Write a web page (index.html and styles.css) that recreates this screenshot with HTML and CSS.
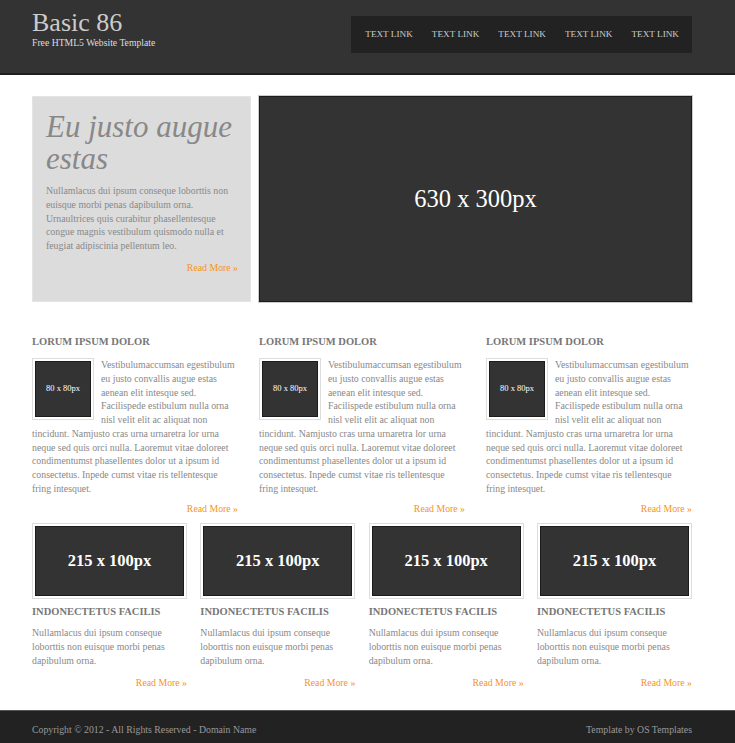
FILE: index.html
```html
<!DOCTYPE html>
<html lang="en">
<head>
<meta charset="utf-8">
<title>Basic 86</title>
<link rel="stylesheet" href="styles.css">
</head>
<body>
<header class="site-header">
  <div class="wrap header-inner">
    <div class="brand">
      <h1 class="brand-title">Basic 86</h1>
      <p class="brand-sub">Free HTML5 Website Template</p>
    </div>
    <nav class="nav">
      <a href="#">Text Link</a>
      <a href="#">Text Link</a>
      <a href="#">Text Link</a>
      <a href="#">Text Link</a>
      <a href="#">Text Link</a>
    </nav>
  </div>
</header>

<main class="wrap main">
  <section class="featured">
    <div class="intro">
      <h2 class="intro-title">Eu justo augue estas</h2>
      <p class="intro-text">Nullamlacus dui ipsum conseque loborttis non euisque morbi penas dapibulum orna. Urnaultrices quis curabitur phasellentesque congue magnis vestibulum quismodo nulla et feugiat adipiscinia pellentum leo.</p>
      <p class="more"><a href="#">Read More &raquo;</a></p>
    </div>
    <div class="hero">630 x 300px</div>
  </section>

  <section class="three-col">
    <article class="col">
      <h3 class="col-title">Lorum Ipsum Dolor</h3>
      <div class="thumb"><span>80 x 80px</span></div>
      <p class="text">Vestibulumaccumsan egestibulum eu justo convallis augue estas aenean elit intesque sed. Facilispede estibulum nulla orna nisl velit elit ac aliquat non tincidunt. Namjusto cras urna urnaretra lor urna neque sed quis orci nulla. Laoremut vitae doloreet condimentumst phasellentes dolor ut a ipsum id consectetus. Inpede cumst vitae ris tellentesque fring intesquet.</p>
      <p class="more"><a href="#">Read More &raquo;</a></p>
    </article>
    <article class="col">
      <h3 class="col-title">Lorum Ipsum Dolor</h3>
      <div class="thumb"><span>80 x 80px</span></div>
      <p class="text">Vestibulumaccumsan egestibulum eu justo convallis augue estas aenean elit intesque sed. Facilispede estibulum nulla orna nisl velit elit ac aliquat non tincidunt. Namjusto cras urna urnaretra lor urna neque sed quis orci nulla. Laoremut vitae doloreet condimentumst phasellentes dolor ut a ipsum id consectetus. Inpede cumst vitae ris tellentesque fring intesquet.</p>
      <p class="more"><a href="#">Read More &raquo;</a></p>
    </article>
    <article class="col">
      <h3 class="col-title">Lorum Ipsum Dolor</h3>
      <div class="thumb"><span>80 x 80px</span></div>
      <p class="text">Vestibulumaccumsan egestibulum eu justo convallis augue estas aenean elit intesque sed. Facilispede estibulum nulla orna nisl velit elit ac aliquat non tincidunt. Namjusto cras urna urnaretra lor urna neque sed quis orci nulla. Laoremut vitae doloreet condimentumst phasellentes dolor ut a ipsum id consectetus. Inpede cumst vitae ris tellentesque fring intesquet.</p>
      <p class="more"><a href="#">Read More &raquo;</a></p>
    </article>
  </section>

  <section class="four-col">
    <article class="card">
      <div class="card-img"><span>215 x 100px</span></div>
      <h3 class="col-title">Indonectetus Facilis</h3>
      <p class="text">Nullamlacus dui ipsum conseque loborttis non euisque morbi penas dapibulum orna.</p>
      <p class="more"><a href="#">Read More &raquo;</a></p>
    </article>
    <article class="card">
      <div class="card-img"><span>215 x 100px</span></div>
      <h3 class="col-title">Indonectetus Facilis</h3>
      <p class="text">Nullamlacus dui ipsum conseque loborttis non euisque morbi penas dapibulum orna.</p>
      <p class="more"><a href="#">Read More &raquo;</a></p>
    </article>
    <article class="card">
      <div class="card-img"><span>215 x 100px</span></div>
      <h3 class="col-title">Indonectetus Facilis</h3>
      <p class="text">Nullamlacus dui ipsum conseque loborttis non euisque morbi penas dapibulum orna.</p>
      <p class="more"><a href="#">Read More &raquo;</a></p>
    </article>
    <article class="card">
      <div class="card-img"><span>215 x 100px</span></div>
      <h3 class="col-title">Indonectetus Facilis</h3>
      <p class="text">Nullamlacus dui ipsum conseque loborttis non euisque morbi penas dapibulum orna.</p>
      <p class="more"><a href="#">Read More &raquo;</a></p>
    </article>
  </section>
</main>

<footer class="site-footer">
  <div class="wrap footer-inner">
    <p>Copyright &copy; 2012 - All Rights Reserved - <a href="#">Domain Name</a></p>
    <p>Template by <a href="#">OS Templates</a></p>
  </div>
</footer>
</body>
</html>
```

FILE: styles.css
```css
* { box-sizing: border-box; }

html, body {
  margin: 0;
  padding: 0;
  background: #fff;
}

body {
  font-family: "Liberation Serif", "Times New Roman", serif;
  font-size: 9.8px;
  line-height: 13.75px;
  color: #888;
}

a { text-decoration: none; color: inherit; }
p, h1, h2, h3 { margin: 0; }

.wrap {
  width: 660px;
  margin-left: 32px;
}

/* Header */
.site-header {
  background: #333;
  height: 75px;
  border-bottom: 2px solid #1f1f1f;
}

.header-inner {
  display: flex;
  justify-content: space-between;
  align-items: flex-start;
}

.brand { padding-top: 9px; }

.brand-title {
  font-weight: normal;
  font-size: 26px;
  line-height: 28px;
  color: #ccc;
}

.brand-sub {
  font-size: 9.7px;
  line-height: 11px;
  color: #ddd;
}

.nav {
  margin-top: 16px;
  height: 37px;
  background: #222;
  display: flex;
  align-items: center;
  gap: 19px;
  padding: 0 13px 0 14px;
}

.nav a {
  text-transform: uppercase;
  color: #ccc;
  font-size: 9.2px;
}

/* Main */
.main { padding-top: 21px; }

.featured {
  display: flex;
  gap: 8px;
  height: 206px;
}

.intro {
  width: 219px;
  background: #dcdcdc;
  border: 1px solid #e4e4e4;
  padding: 14px 12px 0 13px;
}

.intro-title {
  font-style: italic;
  font-weight: normal;
  font-size: 31px;
  line-height: 32px;
  color: #888;
}

.intro-text {
  margin-top: 9px;
  color: #888;
}

.more {
  text-align: right;
  margin-top: 8px;
}

.more a { color: #f7941d; }

.hero {
  flex: 1;
  background: #333;
  border: 1px solid #1c1c1c;
  outline: 1px solid #ccc;
  display: flex;
  align-items: center;
  justify-content: center;
  color: #fff;
  font-size: 24.5px;
}

/* Three columns */
.three-col {
  display: grid;
  grid-template-columns: repeat(3, 206px);
  column-gap: 21px;
  margin-top: 33px;
}

.col-title {
  font-size: 10.5px;
  line-height: 13px;
  font-weight: bold;
  text-transform: uppercase;
  color: #777;
  margin-bottom: 10px;
}

.thumb {
  float: left;
  width: 62px;
  height: 62px;
  border: 1px solid #ddd;
  padding: 2px;
  background: #fff;
  margin: 0 7px 2px 0;
}

.thumb span {
  display: flex;
  height: 100%;
  align-items: center;
  justify-content: center;
  background: #333;
  border: 1px solid #1c1c1c;
  color: #fff;
  font-size: 8.5px;
}

.col .more { margin-top: 6px; }

/* Four columns */
.four-col {
  display: grid;
  grid-template-columns: repeat(4, 155px);
  column-gap: 13.33px;
  margin-top: 8px;
}

.card-img {
  height: 76px;
  border: 1px solid #ddd;
  padding: 2px;
  background: #fff;
  margin-bottom: 6px;
}

.card-img span {
  display: flex;
  height: 100%;
  align-items: center;
  justify-content: center;
  background: #333;
  border: 1px solid #1c1c1c;
  color: #fff;
  font-size: 16.5px;
  font-weight: bold;
}

.card .col-title { margin-bottom: 8px; }
.card .more { margin-top: 8px; }

/* Footer */
.site-footer {
  margin-top: 21px;
  background: #222;
  border-top: 1px solid #555;
  height: 40px;
}

.footer-inner {
  display: flex;
  justify-content: space-between;
  padding-top: 12px;
  color: #999;
  font-size: 9.8px;
}
```
